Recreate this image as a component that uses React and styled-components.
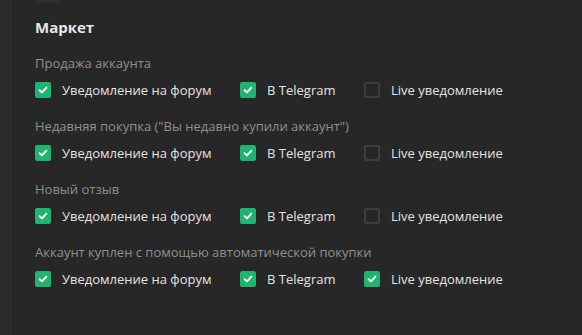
import React from "react";
import styled, { createGlobalStyle } from "styled-components";

const Global = createGlobalStyle`
  html, body { margin: 0; padding: 0; background: #272727; }
  body { font-family: "Open Sans", "Liberation Sans", sans-serif; }
`;

const Page = styled.div`
  display: flex;
  width: 582px;
  height: 335px;
  overflow: hidden;
`;

const Side = styled.div`
  width: 13px;
  background: #2b2b2b;
  border-right: 1px solid #222;
`;

const Panel = styled.div`
  flex: 1;
  background: #272727;
  padding: 0 0 0 21px;
`;

const TopStub = styled.div`
  width: 26px;
  height: 3px;
  background: #2f2f2f;
`;

const Title = styled.div`
  color: #e6e6e6;
  font-size: 15px;
  font-weight: 700;
  margin-top: 13px;
  line-height: 22px;
`;

const Section = styled.div`
  margin-top: ${(p) => (p.first ? "16px" : "18px")};
`;

const Label = styled.div`
  color: #8f8f8f;
  font-size: 13px;
  line-height: 18px;
`;

const Options = styled.div`
  display: flex;
  margin-top: 8px;
  height: 19px;
  align-items: center;
`;

const Option = styled.label`
  display: flex;
  align-items: center;
  width: ${(p) => p.w}px;
  color: #e3e3e3;
  font-size: 13px;
`;

const Box = styled.span`
  width: 16px;
  height: 16px;
  box-sizing: border-box;
  border-radius: 2px;
  margin-right: 11px;
  display: flex;
  align-items: center;
  justify-content: center;
  background: ${(p) => (p.on ? "#1fb46f" : "transparent")};
  border: ${(p) => (p.on ? "none" : "2px solid #3d3d3d")};
`;

const Check = () => (
  <svg width="10" height="10" viewBox="0 0 10 10">
    <path d="M1.6 5.2 L4 7.4 L8.4 2.6" fill="none" stroke="#fff" strokeWidth="1.9" strokeLinecap="round" strokeLinejoin="round" />
  </svg>
);

const Checkbox = ({ on, w, children }) => (
  <Option w={w}>
    <Box on={on}>{on && <Check />}</Box>
    {children}
  </Option>
);

const groups = [
  ["Продажа аккаунта", false],
  ['Недавняя покупка ("Вы недавно купили аккаунт")', false],
  ["Новый отзыв", false],
  ["Аккаунт куплен с помощью автоматической покупки", true],
];

export default function App() {
  return (
    <Page>
      <Global />
      <Side />
      <Panel>
        <TopStub />
        <Title>Маркет</Title>
        {groups.map(([label, live], i) => (
          <Section key={i} first={i === 0}>
            <Label>{label}</Label>
            <Options>
              <Checkbox on w={205}>Уведомление на форум</Checkbox>
              <Checkbox on w={124}>В Telegram</Checkbox>
              <Checkbox on={live} w={160}>Live уведомление</Checkbox>
            </Options>
          </Section>
        ))}
      </Panel>
    </Page>
  );
}
